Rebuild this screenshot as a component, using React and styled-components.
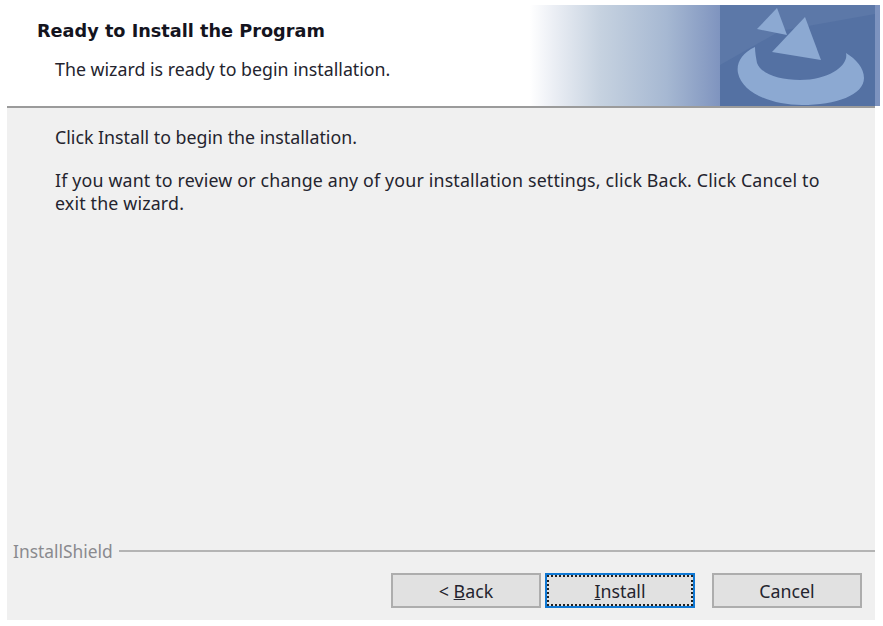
import React from 'react';
import styled, { createGlobalStyle } from 'styled-components';

const GlobalStyle = createGlobalStyle`
  html, body {
    margin: 0;
    padding: 0;
    background: #fff;
  }
  body {
    font-family: "Noto Sans", "DejaVu Sans", sans-serif;
    color: #1c1c28;
  }
`;

const Page = styled.div`
  width: 883px;
  height: 626px;
  padding: 5px 3px 6px 7px;
  box-sizing: border-box;
  display: flex;
  flex-direction: column;
  overflow: hidden;
`;

const Header = styled.header`
  height: 101px;
  display: flex;
  flex-shrink: 0;
`;

const HeaderText = styled.div`
  flex: 1;
  padding: 15px 0 0 30px;
  background: #fff;
`;

const Title = styled.h1`
  margin: 0;
  font-family: "DejaVu Sans", sans-serif;
  font-size: 17.7px;
  line-height: 22px;
  font-weight: 700;
  color: #14141e;
`;

const Subtitle = styled.p`
  margin: 16px 0 0 18px;
  font-size: 17.8px;
  line-height: 22px;
  color: #24242e;
`;

const Fade = styled.div`
  width: 190px;
  background: linear-gradient(90deg, #fff 0%, #eceff5 12%, #c6d2e0 37%, #a6b8d2 72%, #7f94bf 100%);
`;

const Logo = styled.svg`
  width: 160px;
  height: 101px;
  display: block;
`;

const Rule = styled.div`
  height: 2px;
  margin-right: 5px;
  background: #9b9b9b;
  flex-shrink: 0;
`;

const Body = styled.main`
  flex: 1;
  margin-right: 5px;
  background: #f0f0f0;
  display: flex;
  flex-direction: column;
  font-size: 17.8px;
  line-height: 23px;
`;

const Content = styled.div`
  flex: 1;
  padding: 18px 40px 0 48px;
`;

const Paragraph = styled.p`
  margin: 0 0 20px;
  color: #24242e;
  letter-spacing: ${(p) => p.$spread || 0}px;
`;

const BrandRow = styled.div`
  display: flex;
  align-items: center;
  gap: 6px;
  padding-left: 6px;
  height: 22px;
`;

const Brand = styled.span`
  font-size: 17.4px;
  color: #8a8a8e;
`;

const BrandLine = styled.span`
  flex: 1;
  height: 2px;
  background: #b4b4b4;
`;

const Footer = styled.footer`
  display: flex;
  justify-content: flex-end;
  padding: 11px 13px 12px 0;
`;

const Button = styled.button`
  width: 150px;
  height: 35px;
  margin-left: ${(p) => p.$gap || 0}px;
  padding: 0;
  box-sizing: border-box;
  font-family: inherit;
  font-size: 17.8px;
  color: #24242e;
  background: #e1e1e1;
  border: 2px solid ${(p) => (p.$focused ? '#0f78d4' : '#adadad')};
  outline: ${(p) => (p.$focused ? '2px dotted #222' : 'none')};
  outline-offset: -4px;
`;

const Key = styled.span`
  text-decoration: underline;
`;

export default function App() {
  return (
    <>
      <GlobalStyle />
      <Page>
        <Header>
          <HeaderText>
            <Title>Ready to Install the Program</Title>
            <Subtitle>The wizard is ready to begin installation.</Subtitle>
          </HeaderText>
          <Fade />
          <Logo viewBox="0 0 160 101">
            <rect width="160" height="101" fill="#5471a3" />
            <path d="M0 0H155V9L60 26L0 60Z" fill="#5c78a8" />
            <rect x="155" width="5" height="101" fill="#7d93bf" />
            <path d="M57 3L67 30L37 24Z" fill="#8ca9d2" />
            <path d="M85 12L101 55L52 47Z" fill="#8ca9d2" />
            <path d="M35 42C22 48 16 58 18 68C22 88 52 100 82 100C116 100 144 90 144 73C144 63 136 54 126 48C129 60 110 75 80 75C60 75 42 70 37 58C36 53 35 47 35 42Z" fill="#8ca9d2" />
          </Logo>
        </Header>
        <Rule />
        <Body>
          <Content>
            <Paragraph>Click Install to begin the installation.</Paragraph>
            <Paragraph $spread={0.17}>
              If you want to review or change any of your installation settings, click Back. Click Cancel to exit the wizard.
            </Paragraph>
          </Content>
          <BrandRow>
            <Brand>InstallShield</Brand>
            <BrandLine />
          </BrandRow>
          <Footer>
            <Button>&lt; <Key>B</Key>ack</Button>
            <Button $focused $gap={4}><Key>I</Key>nstall</Button>
            <Button $gap={17}>Cancel</Button>
          </Footer>
        </Body>
      </Page>
    </>
  );
}
